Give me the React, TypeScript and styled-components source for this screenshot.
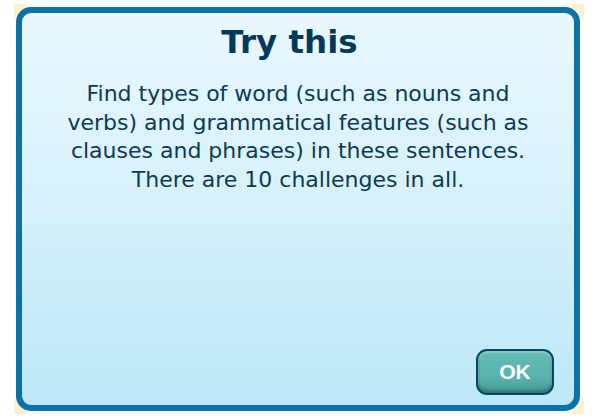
import React from "react";
import styled, { createGlobalStyle } from "styled-components";

const GlobalStyle = createGlobalStyle`
  html, body {
    margin: 0;
    padding: 0;
    background: #ffffff;
  }
  body {
    font-family: Verdana, "DejaVu Sans", sans-serif;
  }
`;

const Page = styled.div`
  width: 596px;
  height: 420px;
  padding: 4px 12px 6px 14px;
  box-sizing: border-box;
`;

const cream = "#fdf1cf";
const fade = "rgba(253, 241, 207, 0)";

// cream halo only shows at the rounded corners
const Halo = styled.div`
  width: 100%;
  height: 100%;
  padding: 3px 4px 3px 2px;
  box-sizing: border-box;
  background:
    radial-gradient(circle at 0 0, ${cream} 0, ${cream} 10px, ${fade} 18px) left top / 26px 26px no-repeat,
    radial-gradient(circle at 100% 0, ${cream} 0, ${cream} 10px, ${fade} 22px) right top / 26px 26px no-repeat,
    radial-gradient(circle at 0 100%, ${cream} 0, ${cream} 10px, ${fade} 18px) left bottom / 26px 26px no-repeat,
    radial-gradient(circle at 100% 100%, ${cream} 0, ${cream} 10px, ${fade} 22px) right bottom / 26px 26px no-repeat;
`;

const Panel = styled.div`
  height: 100%;
  box-sizing: border-box;
  border: 6px solid #0a72a7;
  border-radius: 15px;
  background: linear-gradient(to bottom, #eaf8fd 0%, #d6f1fb 50%, #bbe8f7 100%);
  display: flex;
  flex-direction: column;
  align-items: center;
  padding: 10px 20px 10px 20px;
`;

const Title = styled.h1`
  margin: 0 17px 0 0;
  font-family: Verdana, "DejaVu Sans", sans-serif;
  font-weight: bold;
  font-size: 32.5px;
  line-height: 38px;
  color: #033a5b;
`;

const Message = styled.p`
  margin: 19px 0 0 0;
  white-space: nowrap;
  text-align: center;
  font-size: 22px;
  line-height: 28.5px;
  color: #0c3a57;
`;

const Footer = styled.div`
  margin-top: auto;
  align-self: stretch;
  display: flex;
  justify-content: flex-end;
`;

const OkButton = styled.button`
  width: 78px;
  height: 46px;
  border: 2px solid #0d4466;
  border-radius: 11px;
  background: linear-gradient(to bottom, #62bcb5 0%, #5ab4ad 60%, #449b95 100%);
  box-shadow: inset 0 -3px 3px rgba(20, 80, 80, 0.45), inset 0 2px 2px rgba(255, 255, 255, 0.25);
  color: #ffffff;
  font-family: Arial, "Liberation Sans", sans-serif;
  font-weight: bold;
  font-size: 21px;
  cursor: pointer;
  display: flex;
  align-items: center;
  justify-content: center;
  padding: 0;
`;

const App: React.FC = () => {
  return (
    <>
      <GlobalStyle />
      <Page>
        <Halo>
          <Panel>
            <Title>Try this</Title>
            <Message>
              Find types of word (such as nouns and
              <br />
              verbs) and grammatical features (such as
              <br />
              clauses and phrases) in these sentences.
              <br />
              There are 10 challenges in all.
            </Message>
            <Footer>
              <OkButton>OK</OkButton>
            </Footer>
          </Panel>
        </Halo>
      </Page>
    </>
  );
};

export default App;
